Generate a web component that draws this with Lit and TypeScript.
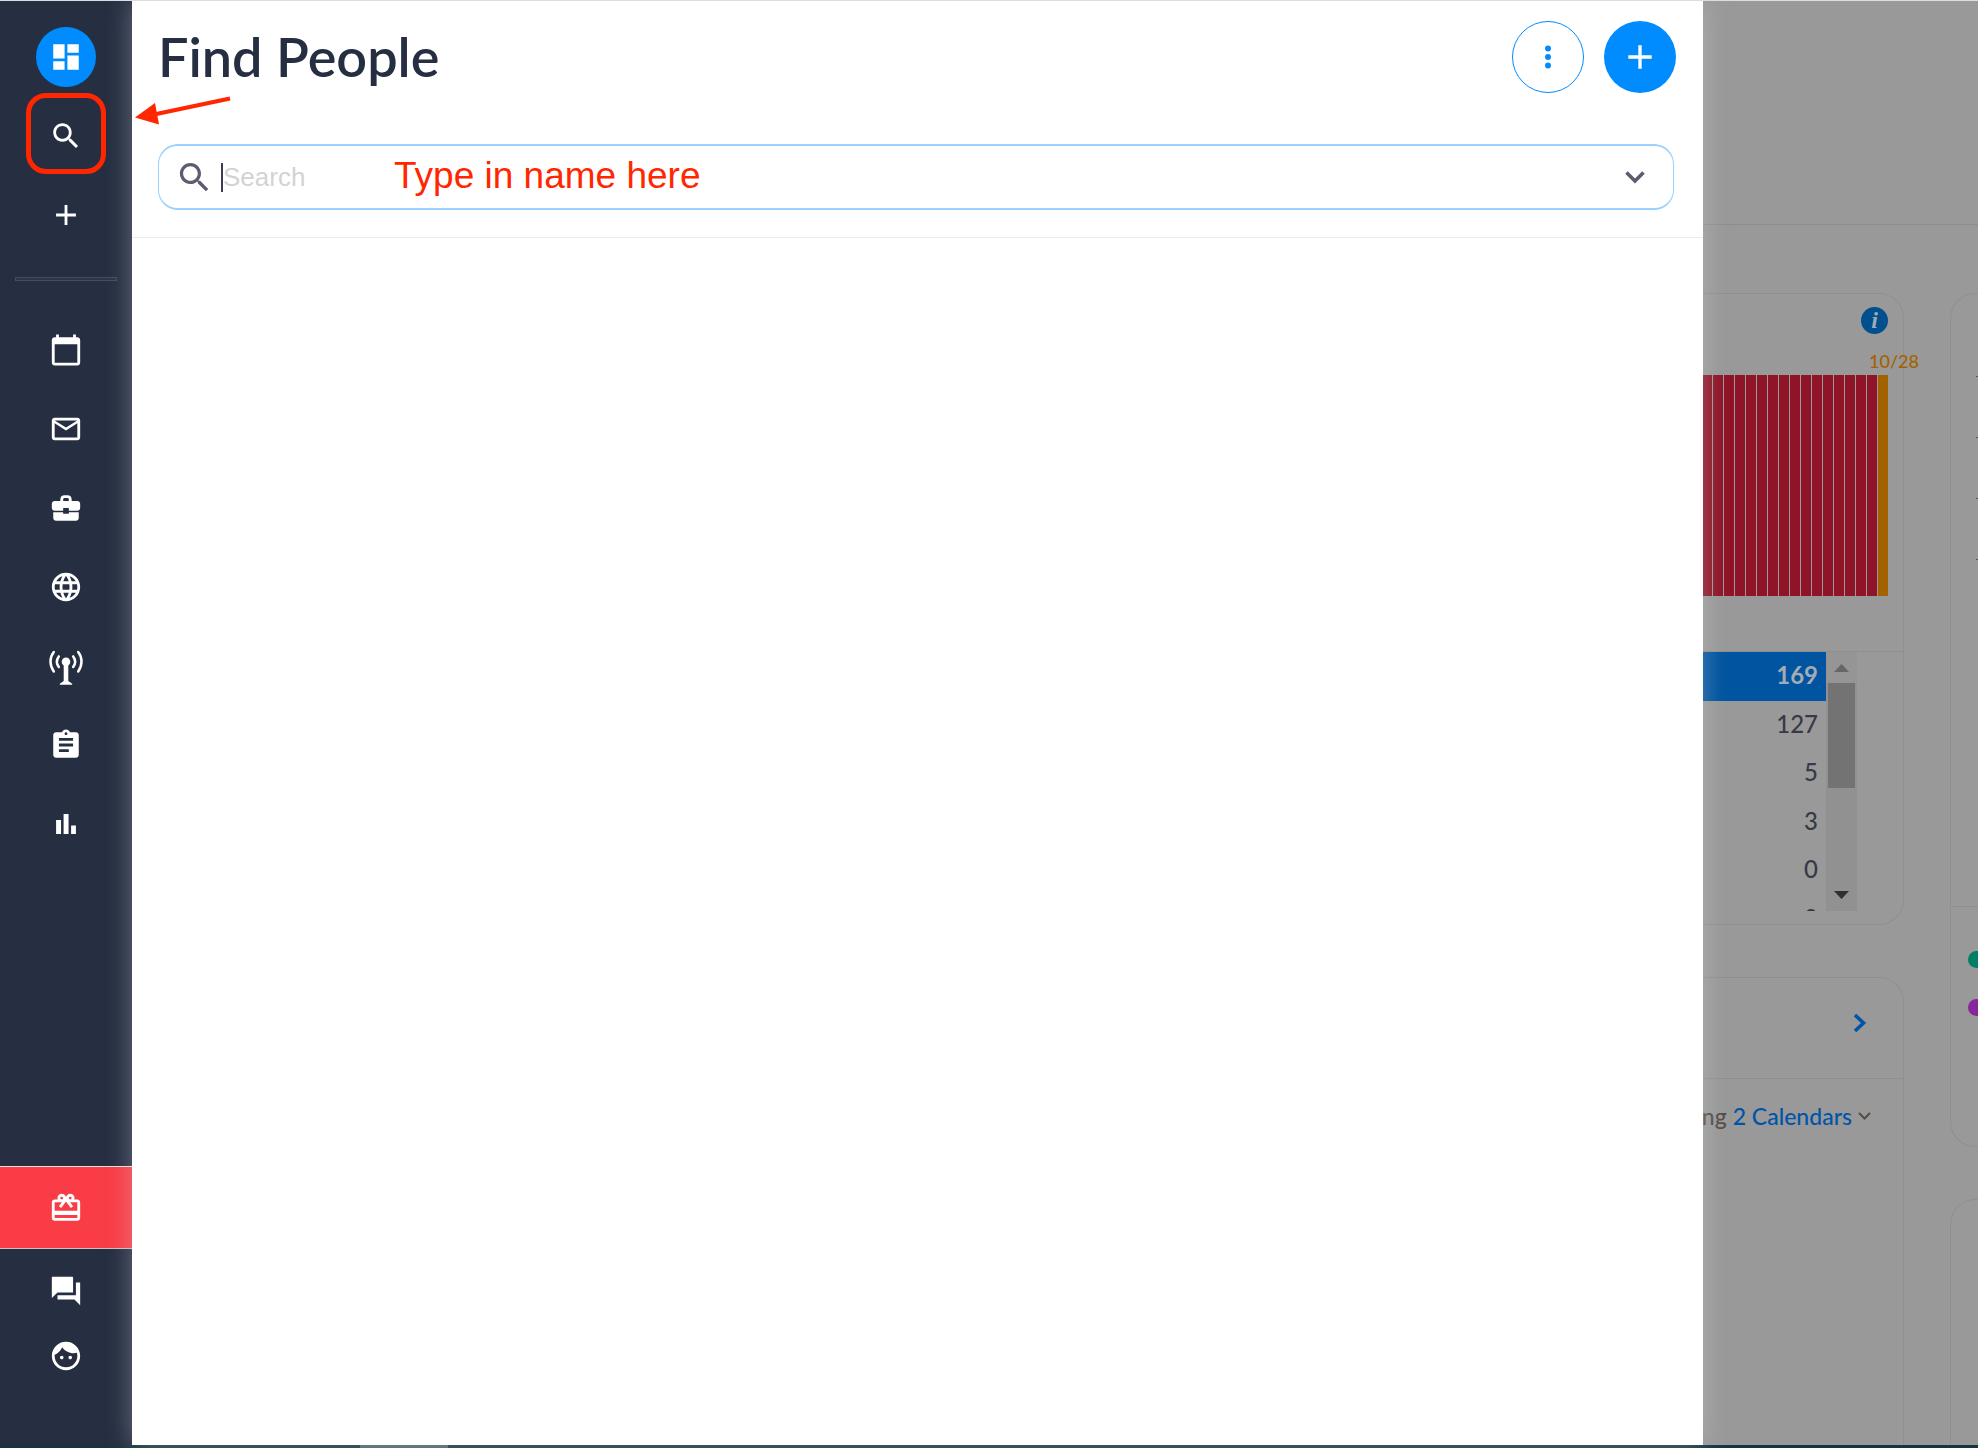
import { LitElement, html, css, svg, nothing } from "lit";
import { customElement } from "lit/decorators.js";

const ICONS = {
  dashboard: "M3 13h8V3H3v10zm0 8h8v-6H3v6zm10 0h8V11h-8v10zm0-18v6h8V3h-8z",
  search:
    "M15.5 14h-.79l-.28-.27C15.41 12.59 16 11.11 16 9.5 16 5.91 13.09 3 9.5 3S3 5.91 3 9.5 5.91 16 9.5 16c1.61 0 3.09-.59 4.23-1.57l.27.28v.79l5 4.99L20.49 19l-4.99-5zm-6 0C7.01 14 5 11.99 5 9.5S7.01 5 9.5 5 14 7.01 14 9.5 11.99 14 9.5 14z",
  plus: "M19 13h-6v6h-2v-6H5v-2h6V5h2v6h6v2z",
  calendar:
    "M20 3h-1V1h-2v2H7V1H5v2H4c-1.1 0-2 .9-2 2v16c0 1.1.9 2 2 2h16c1.1 0 2-.9 2-2V5c0-1.1-.9-2-2-2zm0 18H4V8h16v13z",
  mail:
    "M22 6c0-1.1-.9-2-2-2H4c-1.1 0-2 .9-2 2v12c0 1.1.9 2 2 2h16c1.1 0 2-.9 2-2V6zm-2 0l-8 5-8-5h16zm0 12H4V8l8 5 8-5v10z",
  briefcase:
    "M10 16v-1H3v4c0 1.11.89 2 2 2h14c1.11 0 2-.89 2-2v-4h-7v1h-4zm10-9h-4V6c0-1.9-1.1-3-3-3h-2C9.1 3 8 4.100 8 6v1H4c-1.100 0-2 .9-2 2v3c0 1.110.89 2 2 2h6v-2h4v2h6c1.100 0 2-.9 2-2V9c0-1.100-.9-2-2-2zm-6 0h-4V6c0-.6.4-1 1-1h2c.6 0 1 .4 1 1v1z",
  globe:
    "M11.99 2C6.47 2 2 6.48 2 12s4.47 10 9.99 10C17.52 22 22 17.52 22 12S17.52 2 11.99 2zm6.930 6h-2.950c-.32-1.250-.78-2.450-1.380-3.560 1.840.63 3.370 1.910 4.330 3.560zM12 4.040c.83 1.200 1.480 2.530 1.910 3.960h-3.820c.43-1.430 1.080-2.760 1.910-3.960zM4.260 14C4.100 13.360 4 12.690 4 12s.1-1.360.26-2h3.380c-.08.66-.14 1.320-.14 2 0 .68.06 1.340.14 2H4.260zm.82 2h2.950c.32 1.250.78 2.450 1.380 3.560-1.840-.63-3.370-1.900-4.330-3.560zm2.950-8H5.080c.96-1.660 2.490-2.930 4.330-3.560C8.810 5.550 8.350 6.750 8.030 8zM12 19.960c-.83-1.200-1.480-2.530-1.910-3.960h3.820c-.43 1.430-1.080 2.760-1.910 3.960zM14.340 14H9.660c-.09-.66-.16-1.320-.16-2 0-.68.07-1.350.16-2h4.680c.09.65.16 1.320.16 2 0 .68-.07 1.340-.16 2zm.25 5.560c.6-1.110 1.060-2.310 1.380-3.560h2.950c-.96 1.650-2.490 2.930-4.330 3.560zM16.360 14c.08-.66.14-1.320.14-2 0-.68-.06-1.340-.14-2h3.380c.16.64.26 1.310.26 2s-.1 1.360-.26 2h-3.380z",
  clipboard:
    "M19 3h-4.180C14.400 1.840 13.300 1 12 1c-1.300 0-2.400.84-2.820 2H5c-1.100 0-2 .9-2 2v14c0 1.100.9 2 2 2h14c1.100 0 2-.9 2-2V5c0-1.100-.9-2-2-2zm-7 0c.55 0 1 .45 1 1s-.45 1-1 1-1-.45-1-1 .45-1 1-1zm2 14H7v-2h7v2zm3-4H7v-2h10v2zm0-4H7V7h10v2z",
  bars: "M5 9.200h3.500V19H5zM10.300 5h3.500v14h-3.500zM15.600 13H19v6h-3.400z",
  gift:
    "M20 6h-2.180c.11-.31.18-.65.18-1 0-1.660-1.340-3-3-3-1.050 0-1.960.54-2.500 1.350l-.5.67-.5-.68C10.960 2.540 10.050 2 9 2 7.340 2 6 3.340 6 5c0 .35.07.69.18 1H4c-1.110 0-1.990.89-1.990 2L2 19c0 1.110.89 2 2 2h16c1.110 0 2-.89 2-2V8c0-1.110-.89-2-2-2zm-5-2c.55 0 1 .45 1 1s-.45 1-1 1-1-.45-1-1 .45-1 1-1zM9 4c.55 0 1 .45 1 1s-.45 1-1 1-1-.45-1-1 .45-1 1-1zm11 15H4v-2h16v2zm0-5H4V8h5.080L7 10.830 8.620 12 11 8.760l1-1.360 1 1.360L15.380 12 17 10.830 14.920 8H20v6z",
  chat:
    "M22 6h-3v9H6v3h12l4 4V6zm-5 7V2.500c0-.3-.2-.5-.5-.5h-14c-.3 0-.5.2-.5.5V17l4-4h11z",
  face:
    "M9 11.750c-.69 0-1.250.56-1.250 1.250s.56 1.250 1.250 1.250 1.250-.56 1.250-1.250-.56-1.250-1.250-1.250zm6 0c-.69 0-1.250.56-1.250 1.250s.56 1.250 1.250 1.250 1.250-.56 1.250-1.250-.56-1.250-1.250-1.250zM12 2C6.480 2 2 6.480 2 12s4.480 10 10 10 10-4.480 10-10S17.520 2 12 2zm0 18c-4.410 0-8-3.590-8-8 0-.29.02-.58.05-.86 2.360-1.050 4.230-2.980 5.210-5.370C11.070 8.330 14.050 10 17.420 10c.78 0 1.530-.09 2.250-.26.21.71.33 1.470.33 2.260 0 4.410-3.590 8-8 8z",
  more:
    "M12 8.100a2.100 2.100 0 1 0 0-4.200 2.100 2.100 0 0 0 0 4.200zm0 6a2.100 2.100 0 1 0 0-4.200 2.100 2.100 0 0 0 0 4.200zm0 6a2.100 2.100 0 1 0 0-4.200 2.100 2.100 0 0 0 0 4.200z",
};

type IconName = keyof typeof ICONS;

const icon = (name: IconName) =>
  html`<svg class="icon" viewBox="0 0 24 24" aria-hidden="true">${svg`<path d=${ICONS[name]} />`}</svg>`;

const towerIcon = html`<svg class="icon" viewBox="0 0 34 34" aria-hidden="true">
  <circle cx="17" cy="12.700" r="4.300" />
  <path d="M14.700 15h4.600v17l3.900 2.700v1H10.800v-1l3.900-2.700z" />
  <path
    class="wave"
    d="M9.800 7.400c-2.400 3.200-2.400 7.200 0 10.600M24.200 7.400c2.400 3.200 2.400 7.200 0 10.600M4.800 3c-4.400 5.600-4.400 13.400 0 19.400M29.200 3c4.400 5.600 4.400 13.400 0 19.400"
  />
</svg>`;

const COUNTS = [169, 127, 5, 3, 0, 0];
const DAYS = Array.from({ length: 17 }, (_, i) => i === 16);

@customElement("app-root")
export class AppRoot extends LitElement {
  static styles = css`
    :host {
      display: flex;
      flex-direction: column;
      min-height: 100vh;
      box-sizing: border-box;
      border-top: 1px solid #dcdde3;
      font-family: Lato, "Open Sans", sans-serif;
      color: #262e42;
      overflow: hidden;
    }
    *,
    *::before,
    *::after {
      box-sizing: border-box;
    }
    button {
      border: 0;
      padding: 0;
      margin: 0;
      background: none;
      color: inherit;
      font: inherit;
      cursor: pointer;
      display: flex;
      align-items: center;
      justify-content: center;
    }
    .icon {
      display: block;
      flex: none;
      width: 34px;
      height: 34px;
      fill: currentColor;
      overflow: visible;
    }
    .wave {
      fill: none;
      stroke: currentColor;
      stroke-width: 2.500;
      stroke-linecap: round;
    }
    .shell {
      flex: 1;
      display: flex;
    }

    .sidebar {
      flex: none;
      width: 132px;
      display: flex;
      flex-direction: column;
      background: #262e42;
      color: #fff;
    }
    .group {
      display: flex;
      flex-direction: column;
      align-items: center;
      gap: 45px;
    }
    .group.top {
      padding: 39px 0 45px;
    }
    .group.main {
      padding-top: 52px;
    }
    .nav {
      position: relative;
      width: 34px;
      height: 34px;
    }
    .nav .icon {
      position: relative;
    }
    .nav.current::before {
      content: "";
      position: absolute;
      inset: -13px;
      border-radius: 50%;
      background: #008cff;
    }
    .marker {
      position: absolute;
      left: -23px;
      top: -26px;
      width: 80px;
      height: 81px;
      border: 5px solid #ff2600;
      border-radius: 20px;
      pointer-events: none;
    }
    .rule {
      height: 4px;
      margin: 0 15px;
      border: 1px solid #494c60;
      background: #2f3349;
    }
    .spacer {
      flex: 1;
    }
    .gift {
      width: 100%;
      height: 83px;
      background: #f93c45;
      border-top: 1px solid #e8e4e6;
      border-bottom: 1px solid #c9c0c5;
    }
    .group.foot {
      gap: 31px;
      padding: 25px 0 72px;
    }

    .panel {
      position: relative;
      z-index: 1;
      flex: 1;
      min-width: 0;
      background: #fff;
      box-shadow: 0 0 24px rgba(206, 211, 213, 0.4);
    }
    .head {
      padding: 20px 27px 27px 26px;
      border-bottom: 1px solid #ebebee;
    }
    .titlebar {
      display: flex;
      align-items: center;
      gap: 20px;
      margin-bottom: 51px;
    }
    h1 {
      flex: 1;
      margin: 0;
      font-size: 54px;
      line-height: 72px;
      font-weight: 600;
    }
    .round {
      width: 72px;
      height: 72px;
      border-radius: 50%;
    }
    .round.outline {
      border: 1px solid #008cff;
      color: #008cff;
    }
    .round.solid {
      background: #008cff;
      color: #fff;
    }
    .round.solid .icon {
      width: 40px;
      height: 40px;
    }
    .search {
      position: relative;
      display: flex;
      align-items: center;
      height: 66px;
      margin-right: 2px;
      padding: 0 20px 0 16px;
      border: solid #9ad1ff;
      border-width: 2px 1px;
      border-radius: 20px;
      color: #5c5c70;
    }
    .search .icon {
      width: 39px;
      height: 39px;
    }
    .caret {
      width: 2px;
      height: 29px;
      margin-left: 7px;
      background: #3a3b52;
    }
    input {
      flex: 1;
      min-width: 0;
      height: 100%;
      border: 0;
      padding: 0;
      outline: 0;
      background: none;
      color: #262e42;
      font: 26px "Liberation Sans", Arial, sans-serif;
    }
    input::placeholder {
      color: #d3d3d3;
      opacity: 1;
    }
    .toggle {
      width: 36px;
      height: 36px;
    }
    .toggle .chev {
      width: 22px;
      height: 22px;
    }
    .chev {
      display: block;
      flex: none;
      fill: none;
      stroke: currentColor;
    }
    .note {
      position: absolute;
      left: 235px;
      top: 9px;
      font: 37px/42px "Liberation Sans", Arial, sans-serif;
      color: #ff2600;
      white-space: nowrap;
      pointer-events: none;
    }
    .arrow {
      position: absolute;
      left: 0;
      top: 90px;
      width: 104px;
      height: 40px;
      fill: #ff2600;
      stroke: #ff2600;
    }

    .dash {
      flex: none;
      width: 275px;
      display: flex;
      flex-direction: column;
      overflow: hidden;
      background: #999;
      color: #383945;
    }
    .band {
      height: 224px;
      border-bottom: 1px solid #8e8e8e;
    }
    .columns {
      flex: 1;
      display: grid;
      grid-template-columns: 201px 1fr;
      column-gap: 46px;
      padding-top: 68px;
    }
    .column {
      display: flex;
      flex-direction: column;
      gap: 52px;
      min-width: 0;
    }
    .card {
      border: 1px solid #8f8f8f;
      border-left: 0;
      border-radius: 0 25px 25px 0;
    }
    .card.open {
      flex: 1;
      border-bottom: 0;
      border-radius: 0 25px 0 0;
    }
    .chartbox {
      display: flex;
      flex-direction: column;
      align-items: flex-end;
      height: 358px;
      padding: 13px 15px 0 0;
      border-bottom: 1px solid #8f8f8f;
    }
    .info {
      width: 27px;
      height: 27px;
      border-radius: 50%;
      background: #00508f;
      color: #a3a9ae;
      font: italic bold 24px/27px "Liberation Serif", serif;
    }
    .date {
      margin: 16px -31px 0 0;
      font-size: 18px;
      line-height: 22px;
      font-weight: 500;
      color: #a36200;
    }
    .chart {
      display: flex;
      justify-content: flex-end;
      gap: 1px;
      height: 221px;
      margin-top: 3px;
    }
    .day {
      flex: none;
      width: 10px;
      background: #8f1428;
    }
    .day.today {
      background: #a36200;
    }
    .listbox {
      display: flex;
      height: 259px;
      margin-bottom: 13px;
      overflow: hidden;
    }
    table {
      flex: none;
      width: 123px;
      height: max-content;
      border-collapse: collapse;
      font-size: 24px;
      line-height: 28px;
      font-weight: 500;
    }
    td {
      height: 48px;
      padding: 0 8px 3px 0;
      text-align: right;
    }
    tr:nth-child(odd) td {
      height: 49px;
    }
    .picked td {
      background: #0054a0;
      color: #a3abb5;
      font-weight: 700;
    }
    .scroll {
      width: 31px;
      display: flex;
      flex-direction: column;
      background: #919191;
    }
    .up,
    .down {
      width: 31px;
      height: 31px;
      fill: #666;
      background: #959595;
    }
    .down {
      margin-top: auto;
      fill: #2f2f2f;
      background: none;
    }
    .thumb {
      height: 105px;
      margin: 0 2px;
      background: #737373;
    }
    .cardhead {
      display: flex;
      align-items: center;
      justify-content: flex-end;
      height: 101px;
      padding: 0 34px 10px 0;
      border-bottom: 1px solid #8f8f8f;
    }
    .next {
      width: 18px;
      height: 24px;
      color: #0054a8;
    }
    .viewing {
      display: flex;
      align-items: center;
      justify-content: flex-end;
      gap: 6px;
      padding: 23px 32px 0 0;
      font-size: 23px;
      line-height: 28px;
      font-weight: 500;
      white-space: nowrap;
      color: #554c46;
    }
    .viewing a {
      color: #0054a8;
      text-decoration: none;
    }
    .side {
      border: 1px solid #8f8f8f;
      border-right: 0;
      border-radius: 25px 0 0 25px;
      overflow: hidden;
    }
    .side.open {
      flex: 1;
      border-bottom: 0;
      border-radius: 25px 0 0 0;
    }
    .axis {
      display: flex;
      flex-direction: column;
      align-items: flex-end;
      gap: 60px;
      height: 613px;
      padding-top: 82px;
      border-bottom: 1px solid #8f8f8f;
    }
    .tick {
      width: 2px;
      height: 1px;
      background: #5e5753;
    }
    .legend {
      display: flex;
      flex-direction: column;
      gap: 31px;
      height: 239px;
      padding: 44px 0 0 17px;
    }
    .key {
      width: 17px;
      height: 17px;
      border-radius: 50%;
      background: #007f66;
    }
    .key.alt {
      background: #86269a;
    }

    .taskbar {
      height: 3px;
      padding-left: 360px;
      background: #17353f;
    }
    .task {
      width: 88px;
      height: 3px;
      background: #4c636a;
    }
  `;

  private nav(name: IconName, label: string, extra: unknown = nothing, current = false) {
    return html`<button class="nav ${current ? "current" : ""}" aria-label=${label}>
      ${icon(name)}${extra}
    </button>`;
  }

  private renderSidebar() {
    return html`<nav class="sidebar" aria-label="Main">
      <div class="group top">
        ${this.nav("dashboard", "Dashboard", nothing, true)}
        ${this.nav("search", "Search", html`<span class="marker"></span>`)}
        ${this.nav("plus", "Add")}
      </div>
      <div class="rule"></div>
      <div class="group main">
        ${this.nav("calendar", "Calendar")} ${this.nav("mail", "Mail")}
        ${this.nav("briefcase", "Business")} ${this.nav("globe", "Web")}
        <button class="nav" aria-label="Broadcast">${towerIcon}</button>
        ${this.nav("clipboard", "Tasks")} ${this.nav("bars", "Reports")}
      </div>
      <div class="spacer"></div>
      <button class="gift" aria-label="Rewards">${icon("gift")}</button>
      <div class="group foot">
        ${this.nav("chat", "Messages")} ${this.nav("face", "Profile")}
      </div>
    </nav>`;
  }

  private renderPanel() {
    return html`<main class="panel">
      <header class="head">
        <div class="titlebar">
          <h1>Find People</h1>
          <button class="round outline" aria-label="More options">${icon("more")}</button>
          <button class="round solid" aria-label="Add person">${icon("plus")}</button>
        </div>
        <div class="search">
          ${icon("search")}
          <span class="caret"></span>
          <input type="text" placeholder="Search" aria-label="Search" />
          <button class="toggle" aria-label="Show filters">
            <svg class="chev" viewBox="0 0 22 22">
              <path d="M2.500 6.500L11 15l8.500-8.500" stroke-width="3.600" />
            </svg>
          </button>
          <span class="note">Type in name here</span>
        </div>
      </header>
      <svg class="arrow" viewBox="0 0 104 40" aria-hidden="true">
        <path d="M98 7.500L22 23.500" stroke-width="4" />
        <path d="M3 26.500L23 12l4 21.500z" stroke="none" />
      </svg>
    </main>`;
  }

  private renderDashboard() {
    return html`<aside class="dash">
      <div class="band"></div>
      <div class="columns">
        <div class="column">
          <section class="card">
            <div class="chartbox">
              <button class="info" aria-label="Information">i</button>
              <div class="date">10/28</div>
              <div class="chart">
                ${DAYS.map((today) => html`<div class="day ${today ? "today" : ""}"></div>`)}
              </div>
            </div>
            <div class="listbox">
              <table>
                <tbody>
                  ${COUNTS.map(
                    (n, i) => html`<tr class=${i === 0 ? "picked" : ""}><td>${n}</td></tr>`
                  )}
                </tbody>
              </table>
              <div class="scroll">
                <svg class="up" viewBox="0 0 31 31"><path d="M8 20l7.500-8 7.500 8z" /></svg>
                <div class="thumb"></div>
                <svg class="down" viewBox="0 0 31 31"><path d="M8 11l7.500 8 7.500-8z" /></svg>
              </div>
            </div>
          </section>
          <section class="card open">
            <div class="cardhead">
              <button class="next" aria-label="Next">
                <svg class="chev" viewBox="0 0 18 24" width="18" height="24">
                  <path d="M4 4l8.500 8L4 20" stroke-width="3.600" />
                </svg>
              </button>
            </div>
            <div class="viewing">
              <span>Viewing</span>
              <a href="#calendars">2 Calendars</a>
              <svg class="chev" viewBox="0 0 13 10" width="13" height="10">
                <path d="M1 2l5.500 5.500L12 2" stroke-width="2" />
              </svg>
            </div>
          </section>
        </div>
        <div class="column">
          <section class="side">
            <div class="axis">
              <div class="tick"></div>
              <div class="tick"></div>
              <div class="tick"></div>
              <div class="tick"></div>
            </div>
            <div class="legend">
              <div class="key"></div>
              <div class="key alt"></div>
            </div>
          </section>
          <section class="side open"></section>
        </div>
      </div>
    </aside>`;
  }

  render() {
    return html`<div class="shell">
        ${this.renderSidebar()} ${this.renderPanel()} ${this.renderDashboard()}
      </div>
      <footer class="taskbar"><div class="task"></div></footer>`;
  }
}
